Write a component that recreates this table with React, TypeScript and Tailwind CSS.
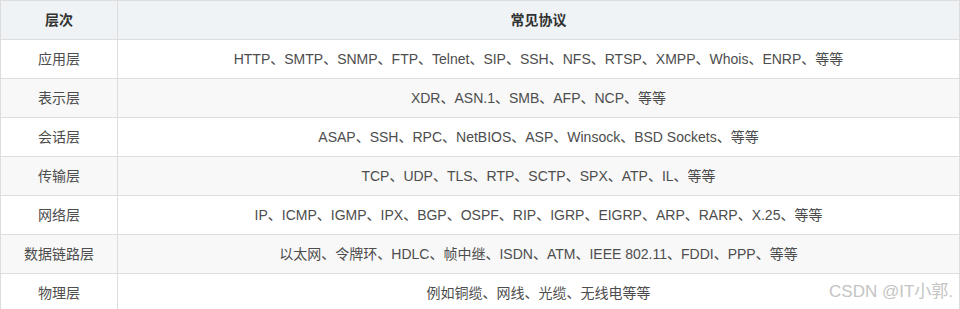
const rows = [
  ['应用层', 'HTTP、SMTP、SNMP、FTP、Telnet、SIP、SSH、NFS、RTSP、XMPP、Whois、ENRP、等等'],
  ['表示层', 'XDR、ASN.1、SMB、AFP、NCP、等等'],
  ['会话层', 'ASAP、SSH、RPC、NetBIOS、ASP、Winsock、BSD Sockets、等等'],
  ['传输层', 'TCP、UDP、TLS、RTP、SCTP、SPX、ATP、IL、等等'],
  ['网络层', 'IP、ICMP、IGMP、IPX、BGP、OSPF、RIP、IGRP、EIGRP、ARP、RARP、X.25、等等'],
  ['数据链路层', '以太网、令牌环、HDLC、帧中继、ISDN、ATM、IEEE 802.11、FDDI、PPP、等等'],
  ['物理层', '例如铜缆、网线、光缆、无线电等等'],
];

export default function App() {
  return (
    <div className="relative h-[309px] w-[960px] overflow-hidden bg-white font-['Liberation_Sans','Noto_Sans_CJK_SC',sans-serif] text-[14px] text-[#4d4d4d]">
      <table className="w-[960px] border-collapse">
        <thead>
          <tr className="bg-[#eff3f5]">
            <th className="h-[39px] w-[117px] border border-[#dddddd] text-[14px] font-bold text-[#333]">层次</th>
            <th className="h-[39px] border border-[#dddddd] text-[14px] font-bold text-[#333]">常见协议</th>
          </tr>
        </thead>
        <tbody>
          {rows.map(([layer, protocols], i) => (
            <tr key={layer} className={i % 2 === 1 ? 'bg-[#f8f8f8]' : 'bg-white'}>
              <td className="h-[39px] border border-[#dddddd] text-center">{layer}</td>
              <td className="h-[39px] border border-[#dddddd] text-center">{protocols}</td>
            </tr>
          ))}
        </tbody>
      </table>
      <div className="absolute bottom-[5px] right-[7px] text-[17px] text-[#c4c4c4]">CSDN @IT小郭.</div>
    </div>
  );
}
